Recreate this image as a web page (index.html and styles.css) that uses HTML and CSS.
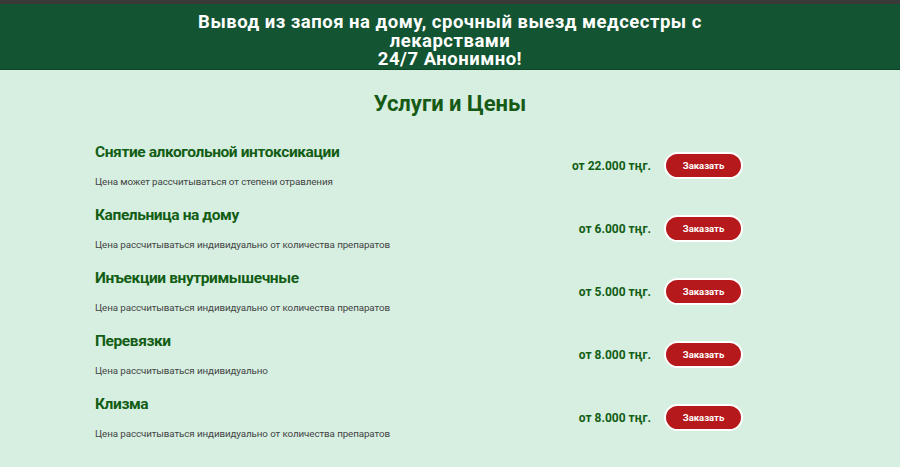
FILE: index.html
```html
<!DOCTYPE html>
<html lang="ru">
<head>
<meta charset="utf-8">
<link rel="stylesheet" href="styles.css">
</head>
<body>
<div class="topbar"></div>
<header class="hero">
  <h1 class="hero-title">Вывод из запоя на дому, срочный выезд медсестры с лекарствами<br>24/7 Анонимно!</h1>
</header>
<main class="services">
  <h2 class="services-title">Услуги и Цены</h2>
  <div class="list">
    <div class="item">
      <div class="info">
        <h3 class="name">Снятие алкогольной интоксикации</h3>
        <p class="desc">Цена может рассчитываться от степени отравления</p>
      </div>
      <div class="order">
        <span class="price">от 22.000 тңг.</span>
        <button class="btn">Заказать</button>
      </div>
    </div>
    <div class="item">
      <div class="info">
        <h3 class="name">Капельница на дому</h3>
        <p class="desc">Цена рассчитываться индивидуально от количества препаратов</p>
      </div>
      <div class="order">
        <span class="price">от 6.000 тңг.</span>
        <button class="btn">Заказать</button>
      </div>
    </div>
    <div class="item">
      <div class="info">
        <h3 class="name">Инъекции внутримышечные</h3>
        <p class="desc">Цена рассчитываться индивидуально от количества препаратов</p>
      </div>
      <div class="order">
        <span class="price">от 5.000 тңг.</span>
        <button class="btn">Заказать</button>
      </div>
    </div>
    <div class="item">
      <div class="info">
        <h3 class="name">Перевязки</h3>
        <p class="desc">Цена рассчитываться индивидуально</p>
      </div>
      <div class="order">
        <span class="price">от 8.000 тңг.</span>
        <button class="btn">Заказать</button>
      </div>
    </div>
    <div class="item">
      <div class="info">
        <h3 class="name">Клизма</h3>
        <p class="desc">Цена рассчитываться индивидуально от количества препаратов</p>
      </div>
      <div class="order">
        <span class="price">от 8.000 тңг.</span>
        <button class="btn">Заказать</button>
      </div>
    </div>
  </div>
</main>
</body>
</html>
```
FILE: styles.css
```css
* { box-sizing: border-box; }
html, body {
  margin: 0;
  padding: 0;
  background: #d6efe1;
  font-family: Roboto, "Liberation Sans", sans-serif;
}
.topbar {
  height: 4px;
  background: #3a3a3a;
}
.hero {
  background: #135532;
  border-bottom: 1px solid #0c4426;
  padding: 9px 0 0;
  height: 66px;
}
.hero-title {
  margin: 0 auto;
  max-width: 530px;
  text-align: center;
  color: #ffffff;
  font-size: 18.5px;
  line-height: 18.5px;
  font-weight: 700;
  letter-spacing: 0.5px;
}
.services {
  padding-top: 20px;
}
.services-title {
  margin: 0 0 24px;
  text-align: center;
  color: #165a16;
  font-size: 22px;
  line-height: 28px;
  font-weight: 700;
}
.list {
  width: 710px;
  margin: 0 auto;
  display: flex;
  flex-direction: column;
}
.item {
  height: 63px;
  display: flex;
  justify-content: space-between;
  align-items: flex-start;
}
.info {
  display: flex;
  flex-direction: column;
}
.name {
  margin: 0;
  color: #135d15;
  font-size: 15.5px;
  line-height: 20px;
  font-weight: 700;
  letter-spacing: -0.4px;
}
.desc {
  margin: 13px 0 0;
  color: #444;
  font-size: 9.8px;
  line-height: 14px;
  font-weight: 400;
  letter-spacing: -0.1px;
}
.order {
  display: flex;
  align-items: center;
  gap: 13px;
  padding-right: 62px;
  padding-top: 10px;
}
.price {
  color: #135d15;
  font-size: 12px;
  font-weight: 700;
}
.btn {
  width: 79px;
  height: 27px;
  border: 2px solid #ffffff;
  border-radius: 14px;
  background: #b5191c;
  color: #ffffff;
  font-family: Roboto, "Liberation Sans", sans-serif;
  font-size: 9.5px;
  font-weight: 700;
  padding: 0;
}
```
